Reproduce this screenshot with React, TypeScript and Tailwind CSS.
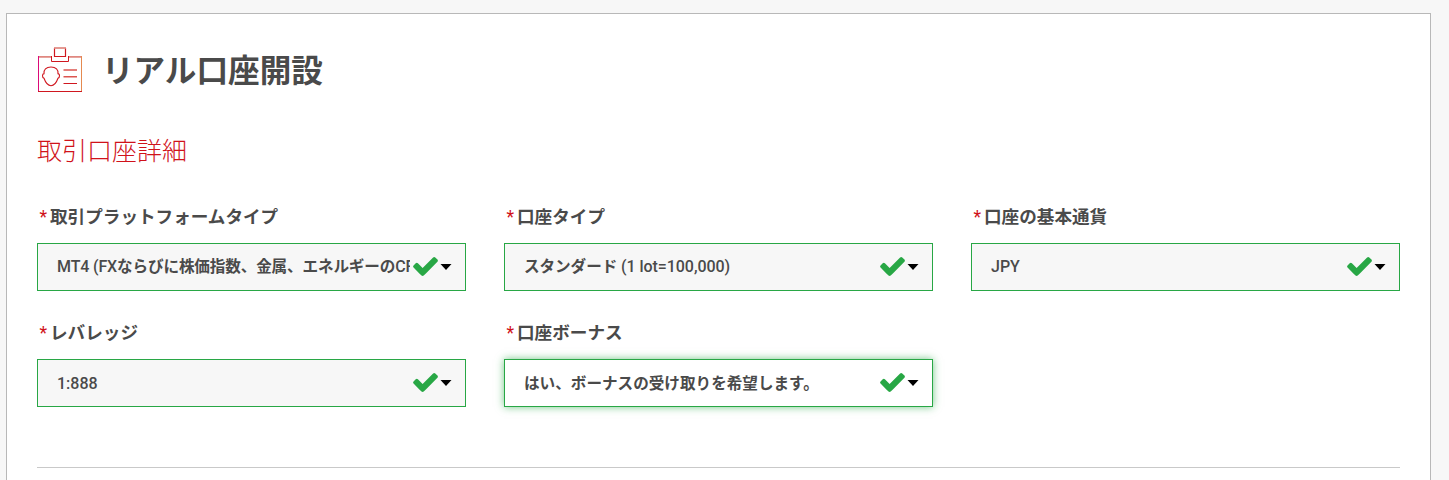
import { Fragment } from "react";

type FieldProps = {
  label: string;
  value: string;
  valueClass?: string;
  focused?: boolean;
};

function AccountIcon() {
  return (
    <svg className="h-[46px] w-[46px] shrink-0" viewBox="0 0 46 46" fill="none" stroke="#d0171f" strokeWidth="1">
      <path d="M1 9.8H14.5M31.5 9.8H45" stroke="#e08880" strokeWidth="1.7" />
      <path d="M1.5 9V45" stroke="#dc0a78" />
      <path d="M44.5 9V45" stroke="#e58a50" />
      <path d="M1 44.5H45" />
      <path d="M14.5 9V14.5H31.5V9" />
      <path d="M17.5 1V9.5H28.5V1" strokeWidth="1.2" />
      <path d="M17 1H29" stroke="#e08880" strokeWidth="1.7" />
      <path d="M14 20C9 20 6.6 22.6 7 26.6C5 26.6 5 30.6 7 31.3C8.5 35.5 11.5 38.7 14 38.7C16.5 38.7 19.5 35.5 21 31.3C23 30.6 23 26.6 21 26.6C21.4 22.6 19 20 14 20Z" strokeWidth="1.1" />
      <path d="M26.5 23H40M26.5 29.7H40" stroke="#dc5550" strokeWidth="1.5" />
      <path d="M26.5 36.5H40" />
    </svg>
  );
}

function CheckIcon() {
  return (
    <svg className="h-[19px] w-[25px] shrink-0 text-[#28a745]" viewBox="121 334 1550 1188" fill="currentColor">
      <path d="M1671 566q0 40-28 68l-724 724-136 136q-28 28-68 28t-68-28l-136-136-362-362q-28-28-28-68t28-68l136-136q28-28 68-28t68 28l294 295 656-657q28-28 68-28t68 28l136 136q28 28 28 68z" />
    </svg>
  );
}

// Latin runs keep the medium weight; Japanese runs are set bold and slightly tighter.
function MixedText({ text }: { text: string }) {
  const runs = text.match(/[\u3000-\u9fff]+|[^\u3000-\u9fff]+/g) ?? [];
  return (
    <>
      {runs.map((run, index) =>
        /[\u3000-\u9fff]/.test(run) ? (
          <span key={index} className="text-[15.6px] font-bold">
            {run}
          </span>
        ) : (
          <Fragment key={index}>{run}</Fragment>
        ),
      )}
    </>
  );
}

function Field({ label, value, valueClass = "", focused = false }: FieldProps) {
  return (
    <div>
      <div className="flex h-[27px] items-center pt-[2px] pl-[2.5px] leading-none">
        <span className="w-[10.5px] text-[17.6px] text-[#d0121a]">*</span>
        <span className="text-[17.6px] font-bold whitespace-nowrap text-[#4a4a4a]">{label}</span>
      </div>
      <button
        type="button"
        className={`mt-[13px] flex h-12 w-full items-center border border-[#28a745] pr-[13px] pl-[19px] text-left ${
          focused ? "bg-white shadow-[0_0_8px_rgba(40,167,69,0.65)]" : "bg-[#f7f7f7]"
        }`}
      >
        <span
          className={`w-[353px] shrink-0 overflow-hidden text-[16px] leading-6 font-medium whitespace-nowrap text-[#4a4a4a] ${valueClass}`}
        >
          <MixedText text={value} />
        </span>
        <span className="ml-[3px] flex items-center gap-[2px] pb-[2px]">
          <CheckIcon />
          <svg className="mt-px h-[6px] w-[12px]" viewBox="0 0 12 6">
            <path d="M0.5 0H11.5L6 6Z" fill="#000" />
          </svg>
        </span>
      </button>
    </div>
  );
}

export default function App() {
  return (
    <div className="h-[480px] overflow-hidden bg-[#f7f7f7] pt-[13px] pl-[6px] font-[Roboto,'Noto_Sans_CJK_JP',sans-serif]">
      <main className="h-[600px] w-[1425px] border border-[#b8b8b8] bg-white px-[30px] pt-[33px]">
        <header className="flex h-[46px] items-center gap-[19px]">
          <AccountIcon />
          <h1 className="pt-[3px] text-[31.6px] leading-none font-bold whitespace-nowrap text-[#4a4a4a]">
            リアル口座開設
          </h1>
        </header>
        <h2 className="mt-[44px] h-[30px] text-[25px] leading-[30px] font-light text-[#d0121a]">取引口座詳細</h2>
        <div className="mt-[36px] grid grid-cols-3 gap-x-[38px] gap-y-[28px]">
          <Field
            label="取引プラットフォームタイプ"
            value="MT4 (FXならびに株価指数、金属、エネルギーのCFD)"
            valueClass="tracking-[-0.14px]"
          />
          <Field label="口座タイプ" value="スタンダード (1 lot=100,000)" valueClass="tracking-[-0.06px]" />
          <Field label="口座の基本通貨" value="JPY" />
          <Field label="レバレッジ" value="1:888" valueClass="pt-[2px]" />
          <Field label="口座ボーナス" value="はい、ボーナスの受け取りを希望します。" valueClass="pt-px" focused />
        </div>
        <hr className="mt-[60px] border-[#c9c9c9]" />
      </main>
    </div>
  );
}
